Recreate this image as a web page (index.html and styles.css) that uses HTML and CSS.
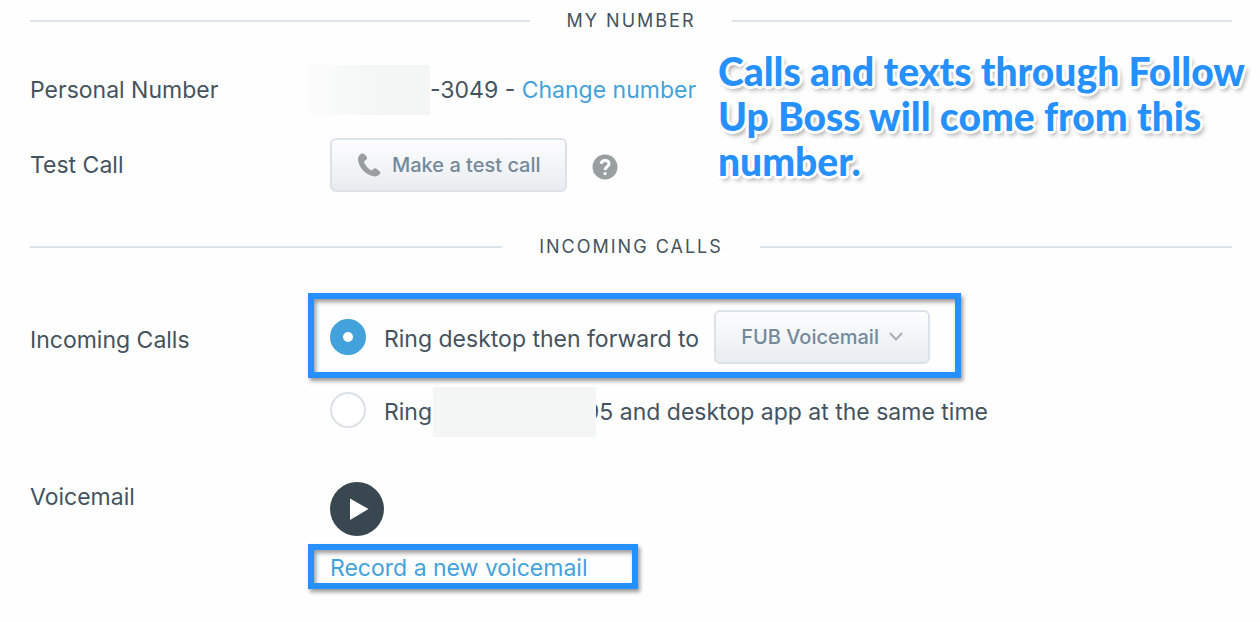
FILE: index.html
```
<!DOCTYPE html>
<html lang="en">
<head>
<meta charset="utf-8">
<title>Phone settings</title>
<link rel="stylesheet" href="styles.css">
</head>
<body>
<main class="settings">
  <section class="section">
    <h2 class="section-title">MY NUMBER</h2>
    <div class="row">
      <div class="label">Personal Number</div>
      <div class="field number-line">
        <span class="mask mask-number"></span><span>-3049 - <a class="link" href="#">Change number</a></span>
      </div>
    </div>
    <div class="row row-test">
      <div class="label">Test Call</div>
      <div class="field test-line">
        <button class="button" type="button">
          <svg class="phone" viewBox="0 0 24 24" aria-hidden="true"><path d="M3.6 1.2 Q5.8-.2 7.8 1.6 L9.8 4 Q10.6 5.6 9.2 6.8 L6.9 8.4 Q8.6 14.2 14.6 17.4 L17 15.6 Q18.4 14.7 19.6 15.7 L22.8 18.6 Q24 20 22.7 21.3 Q20.4 23.9 16.8 23.3 C8.7 22 1.6 14.2 1 6.4 Q.8 2.7 3.6 1.2Z"/></svg>
          Make a test call
        </button>
        <button class="help" type="button" aria-label="Help">
          <svg viewBox="0 0 26 26" aria-hidden="true"><circle cx="13" cy="13" r="12.5"/><path d="M9.2 9.8 C9.6 5.4 17 5.4 17 9.7 C17 12.7 13.2 12.6 13.2 16"/><circle class="dot" cx="13.1" cy="19.6" r="1.7"/></svg>
        </button>
      </div>
    </div>
    <p class="note">Calls and texts through Follow<br>Up Boss will come from this<br>number.</p>
  </section>

  <section class="section">
    <h2 class="section-title">INCOMING CALLS</h2>
    <div class="row row-incoming">
      <div class="label label-incoming">Incoming Calls</div>
      <div class="field options">
        <div class="highlight option">
          <input class="radio" type="radio" name="incoming" id="forward" checked>
          <label class="forward-label" for="forward">Ring desktop then forward to</label>
          <span class="select-wrap">
            <select class="button select" aria-label="Forward to"><option>FUB Voicemail</option></select>
            <svg class="chevron" viewBox="0 0 14 9" aria-hidden="true"><path d="M1 1 L7 7.5 L13 1"/></svg>
          </span>
        </div>
        <div class="option option-plain">
          <input class="radio" type="radio" name="incoming" id="both">
          <label class="number-line" for="both">Ring<span class="mask mask-mobile"></span><span>95 and desktop app at the same time</span></label>
        </div>
      </div>
    </div>
    <div class="row row-voicemail">
      <div class="label">Voicemail</div>
      <div class="field voicemail">
        <button class="play" type="button" aria-label="Play voicemail">
          <svg viewBox="0 0 54 54" aria-hidden="true"><path d="M20 16.5 L38.5 27 L20 38Z"/></svg>
        </button>
        <div class="highlight record"><a class="link" href="#">Record a new voicemail</a></div>
      </div>
    </div>
  </section>
</main>
</body>
</html>
```

FILE: styles.css
```
* { box-sizing: border-box; }

body {
  margin: 0;
  background: #fefefe;
  color: #45535e;
  font: 23px/30px Inter, "Open Sans", sans-serif;
}

.settings { padding: 0 28px 32px 30px; }

.section { position: relative; }

.section-title {
  display: flex;
  align-items: center;
  gap: 37px;
  margin: 0;
  height: 42px;
  font-size: 18px;
  font-weight: 400;
  letter-spacing: 2px;
}

.section-title::before,
.section-title::after {
  content: "";
  flex: 1;
  height: 2px;
  background: #dce3e8;
}

.row {
  display: grid;
  grid-template-columns: 300px 1fr;
  align-items: center;
  margin-top: 23px;
}

.row-test { margin-bottom: 34px; }

.number-line,
.test-line,
.option { display: flex; align-items: center; }

.mask {
  position: relative;
  flex: none;
  height: 50px;
  background: #f4f5f5;
}

.mask-number {
  width: 122px;
  margin-left: -22px;
  background: linear-gradient(90deg, #fcfcfc, #f4f5f5 60%);
}

.mask-mobile { width: 163px; margin-left: 1px; margin-right: -11px; }

.link { color: #43a2db; text-decoration: none; }

.button {
  display: flex;
  align-items: center;
  gap: 11px;
  height: 54px;
  padding: 0 24px 0 25px;
  border: 2px solid #dce2e7;
  border-radius: 6px;
  background: linear-gradient(#fdfdfe, #e9ecf0);
  color: #748a9b;
  font: 500 20px/30px Inter, "Open Sans", sans-serif;
}

.phone { width: 24px; height: 24px; fill: #999e9f; }

.help {
  width: 26px;
  height: 26px;
  margin: 4px 0 0 25px;
  padding: 0;
  border: 0;
  background: none;
}

.help svg { display: block; fill: #999e9f; }
.help path { fill: none; stroke: #fefefe; stroke-width: 3; }
.help .dot { fill: #fefefe; }

.note {
  position: absolute;
  top: 49px;
  left: 688px;
  margin: 0;
  color: #2790ff;
  font: 900 39px/45px Lato, sans-serif;
  white-space: nowrap;
  text-shadow:
    3px 0 #fff, -3px 0 #fff, 0 3px #fff, 0 -3px #fff,
    2px 2px #fff, -2px 2px #fff, 2px -2px #fff, -2px -2px #fff,
    3px 4px 5px #999;
}

.row-incoming { align-items: start; margin-top: 25px; }
.label-incoming { margin-top: 32px; }

.options,
.voicemail {
  display: flex;
  flex-direction: column;
  align-items: flex-start;
}

.options { gap: 9px; }
.voicemail { gap: 8px; }

.highlight {
  margin-left: -22px;
  border: 6px solid #2790ff;
  box-shadow: 2px 3px 4px #999, inset 2px 3px 4px #999;
}

.option.highlight { height: 85px; padding: 3px 25px 0 16px; }

.forward-label { padding-top: 4px; }

.radio {
  flex: none;
  appearance: none;
  width: 36px;
  height: 36px;
  margin: 0 18px 0 0;
  border: 2px solid #dce2e7;
  border-radius: 50%;
  background: #fff;
}

.option-plain .radio { margin-bottom: 4px; }

.radio:checked { border: 13px solid #43a2db; }

.select-wrap { position: relative; margin-left: 15px; }

.select {
  appearance: none;
  width: 216px;
}

.chevron {
  position: absolute;
  top: 22px;
  right: 27px;
  width: 14px;
  height: 9px;
  fill: none;
  stroke: #a3adb5;
  stroke-width: 2;
  pointer-events: none;
}

.row-voicemail { align-items: start; margin-top: 45px; }

.play {
  width: 54px;
  height: 54px;
  padding: 0;
  border: 0;
  border-radius: 50%;
  background: #394751;
}

.play svg { display: block; fill: #fff; }

.record { width: 330px; padding: 3px 16px 0; }
```
